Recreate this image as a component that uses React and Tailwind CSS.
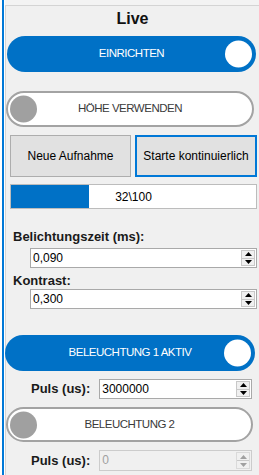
import clsx from "clsx";

const font = "font-['Liberation_Sans',Arial,sans-serif]";

const Toggle = ({ label, on, className }) => {
  return (
    <div
      className={clsx(
        "relative flex items-center justify-center rounded-full",
        on ? "bg-[#0071c6] text-white" : "bg-white border-2 border-[#a3a3a3] text-[#3a3a3a]",
        className
      )}
    >
      <span className="text-[11.5px] tracking-[-0.5px]">{label}</span>
      {on ? (
        <div className="absolute right-[4px] top-1/2 -translate-y-1/2 w-[27px] h-[27px] rounded-full bg-white" />
      ) : (
        <div className="absolute left-[2px] top-1/2 -translate-y-1/2 w-[27px] h-[27px] rounded-full bg-[#a0a0a0]" />
      )}
    </div>
  );
};

const Arrow = ({ up, disabled }) => (
  <svg width="7" height="4" viewBox="0 0 7 4">
    <path
      d={up ? "M0 4 L3.5 0 L7 4 Z" : "M0 0 L3.5 4 L7 0 Z"}
      fill={disabled ? "#a0a0a0" : "#000"}
    />
  </svg>
);

const SpinBox = ({ value, disabled, className }) => {
  return (
    <div
      className={clsx(
        "flex items-stretch h-[20px] border p-[1px]",
        disabled ? "border-[#cccccc] bg-[#f0f0f0] text-[#a0a0a0]" : "border-[#a9a9a9] bg-white text-black",
        className
      )}
    >
      <span className="flex-1 pl-[1px] text-[12px] leading-[16px]">{value}</span>
      <div
        className={clsx(
          "flex flex-col w-[14px] border",
          disabled ? "border-[#dadada]" : "border-[#c8c8c8]"
        )}
      >
        <div className="flex-1 flex items-center justify-center bg-[#f0f0f0] border-b border-[#c8c8c8]">
          <Arrow up disabled={disabled} />
        </div>
        <div className="flex-1 flex items-center justify-center bg-[#f0f0f0]">
          <Arrow disabled={disabled} />
        </div>
      </div>
    </div>
  );
};

const App = () => {
  return (
    <div className={clsx("flex w-[259px] h-[475px] overflow-hidden bg-[#f3f3f3]", font)}>
      <div className="w-[2px] bg-white" />
      <div className="w-[2px] bg-[#0078d7]" />
      <div className="w-[1px] bg-white" />
      <div className="flex-1 pt-[5px]">
        <div className="h-full flex flex-col bg-[#f0f0f0] border-l border-t border-[#d4d4d4]">
          <h1 className="mt-[4px] text-center text-[16px] leading-[18px] font-bold text-[#111]">Live</h1>

          <Toggle label="EINRICHTEN" on className="mt-[8px] ml-[1px] w-[249px] h-[36px]" />
          <Toggle label="HÖHE VERWENDEN" className="mt-[19px] w-[248px] h-[36px]" />

          <div className="mt-[8px] ml-[4px] flex gap-[4px] h-[42px]">
            <button className="w-[121px] bg-[#e1e1e1] border border-[#adadad] text-[12px] text-black">
              Neue Aufnahme
            </button>
            <button className="w-[122px] bg-[#e1e1e1] border-2 border-[#0078d7] text-[12px] text-black">
              Starte kontinuierlich
            </button>
          </div>

          <div className="relative mt-[7px] ml-[4px] w-[247px] h-[25px] bg-white border border-[#bcbcbc]">
            <div className="h-full bg-[#0071c6]" style={{ width: "32%" }} />
            <span className="absolute inset-0 flex items-center justify-center text-[12px] text-black">32\100</span>
          </div>

          <label className="mt-[20px] ml-[7px] text-[13px] leading-[15px] font-bold text-[#1a1a1a]">
            Belichtungszeit (ms):
          </label>
          <SpinBox value="0,090" className="mt-[4px] ml-[24px] w-[227px]" />

          <label className="mt-[5px] ml-[7px] text-[13px] leading-[15px] font-bold text-[#1a1a1a]">Kontrast:</label>
          <SpinBox value="0,300" className="mt-[1px] ml-[24px] w-[227px]" />

          <Toggle label="BELEUCHTUNG 1 AKTIV" on className="mt-[26px] -ml-px w-[250px] h-[36px]" />

          <div className="mt-[8px] flex items-center pl-[25px] gap-[9px]">
            <span className="text-[13px] font-bold text-[#1a1a1a]">Puls (us):</span>
            <SpinBox value="3000000" className="w-[153px]" />
          </div>

          <Toggle label="BELEUCHTUNG 2" className="mt-[8px] w-[247px] h-[35px]" />

          <div className="mt-[8px] flex items-center pl-[25px] gap-[9px]">
            <span className="text-[13px] font-bold text-[#1a1a1a]">Puls (us):</span>
            <SpinBox value="0" disabled className="w-[153px] h-[21px]" />
          </div>
        </div>
      </div>
    </div>
  );
};

export default App;
